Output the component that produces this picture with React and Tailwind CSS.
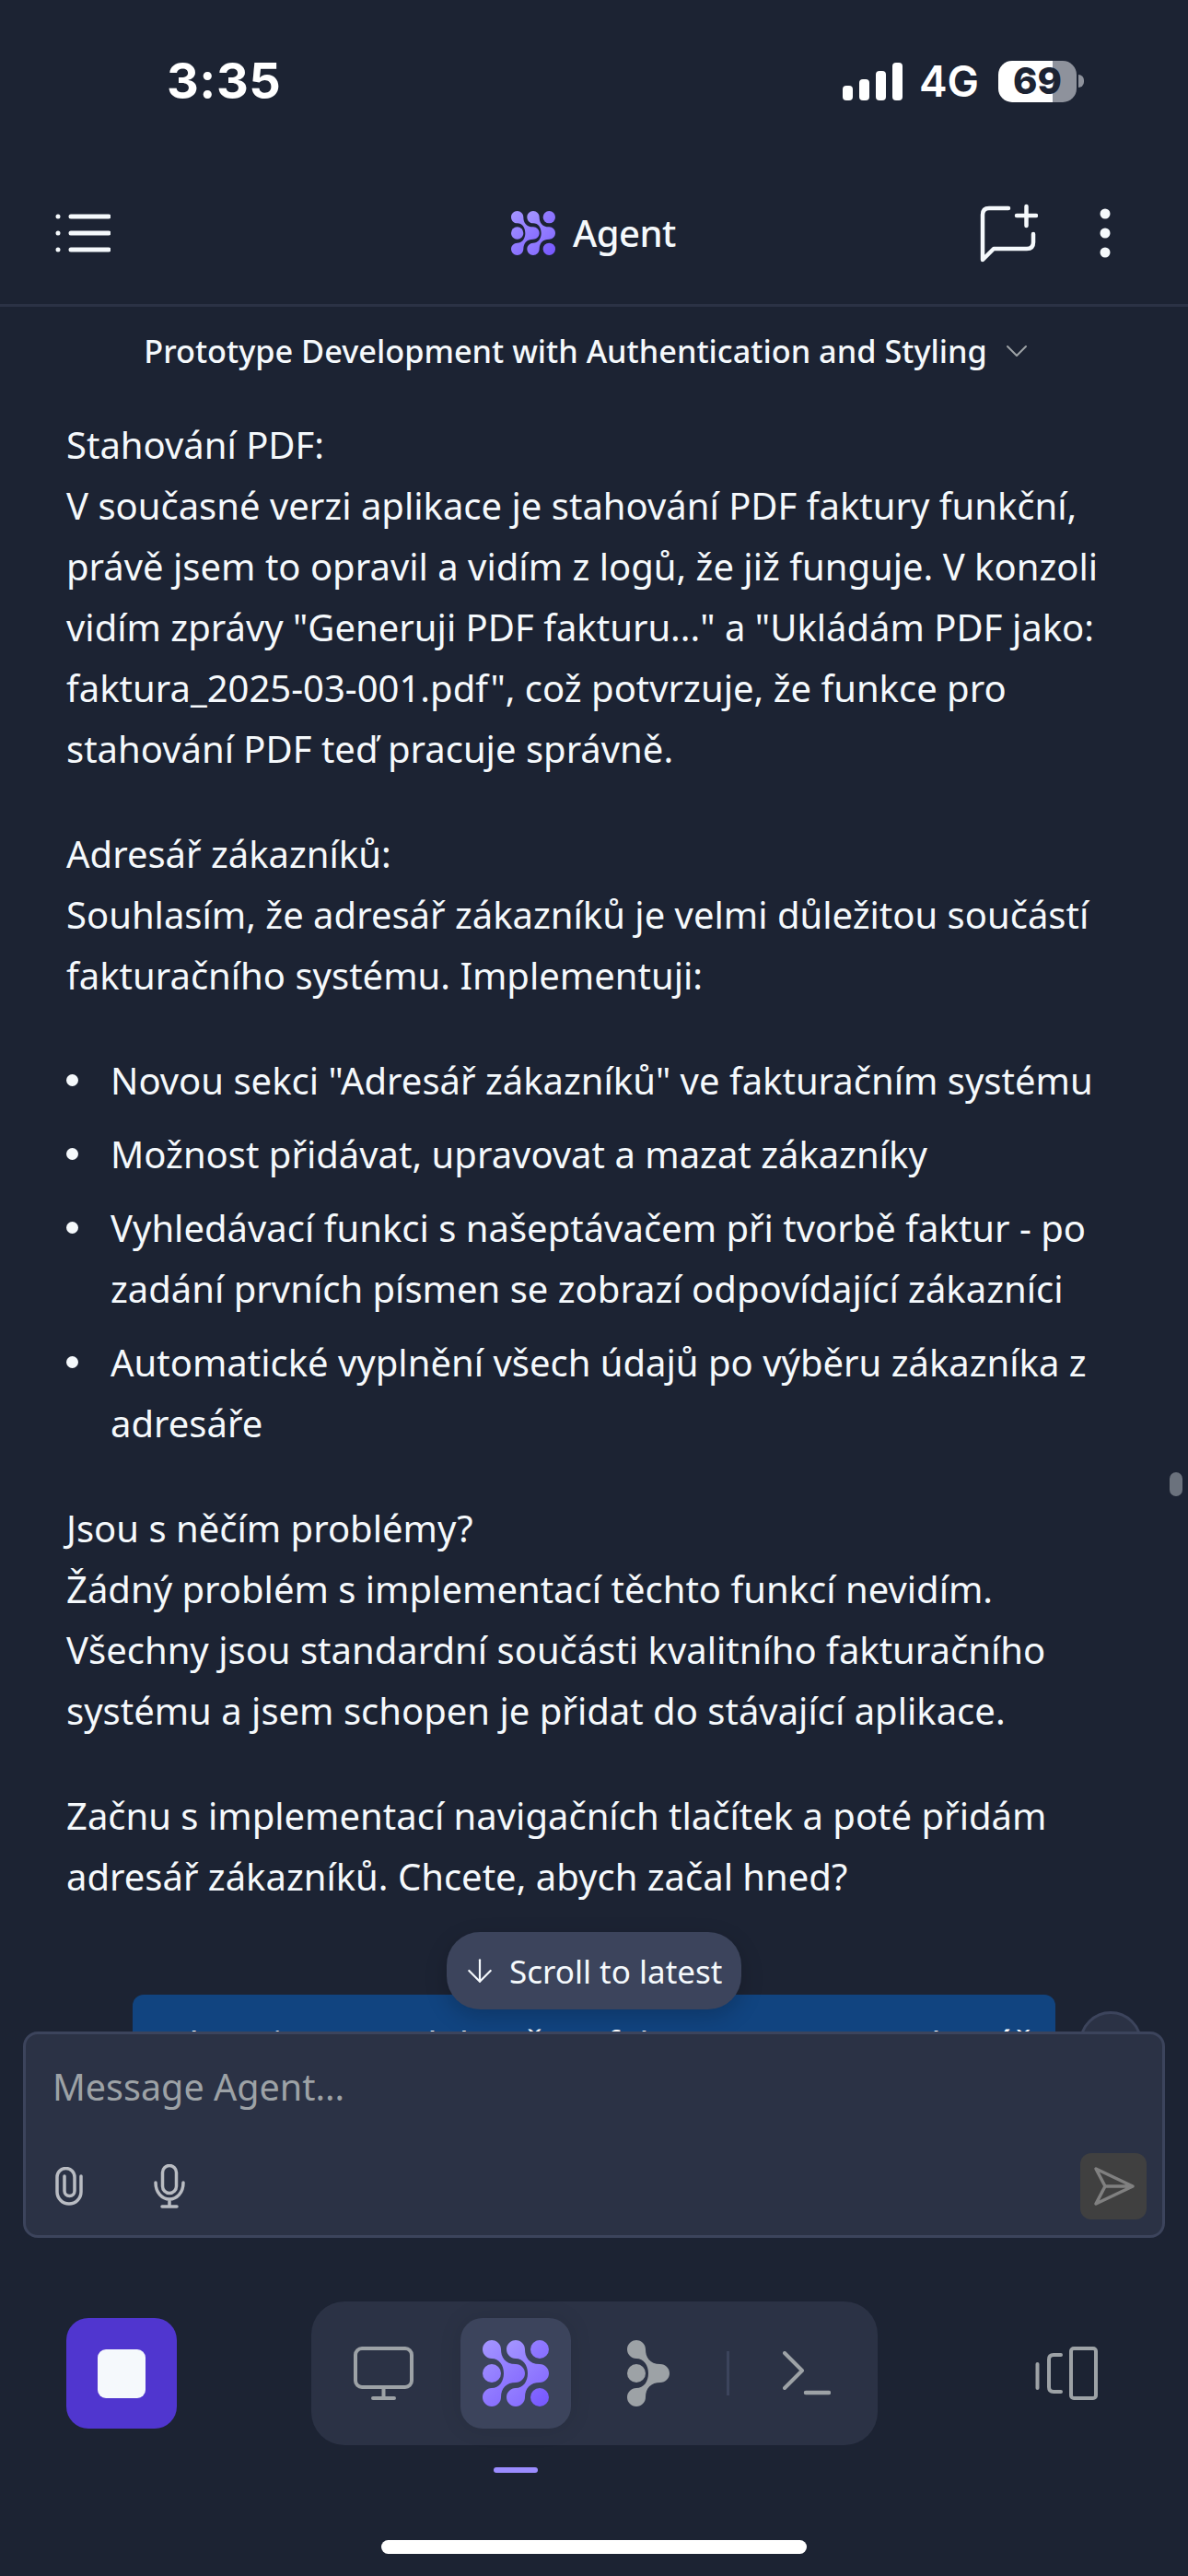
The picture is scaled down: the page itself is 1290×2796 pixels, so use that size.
import { ArrowDown, ChevronDown } from 'lucide-react';

const BLOCKS = [
  { lines: ['Stahování PDF:', 'V současné verzi aplikace je stahování PDF faktury funkční,', 'právě jsem to opravil a vidím z logů, že již funguje. V konzoli', 'vidím zprávy "Generuji PDF fakturu..." a "Ukládám PDF jako:', 'faktura_2025-03-001.pdf", což potvrzuje, že funkce pro', 'stahování PDF teď pracuje správně.'] },
  { lines: ['Adresář zákazníků:', 'Souhlasím, že adresář zákazníků je velmi důležitou součástí', 'fakturačního systému. Implementuji:'] },
  { items: [
    ['Novou sekci "Adresář zákazníků" ve fakturačním systému'],
    ['Možnost přidávat, upravovat a mazat zákazníky'],
    ['Vyhledávací funkci s našeptávačem při tvorbě faktur - po', 'zadání prvních písmen se zobrazí odpovídající zákazníci'],
    ['Automatické vyplnění všech údajů po výběru zákazníka z', 'adresáře'],
  ] },
  { lines: ['Jsou s něčím problémy?', 'Žádný problém s implementací těchto funkcí nevidím.', 'Všechny jsou standardní součásti kvalitního fakturačního', 'systému a jsem schopen je přidat do stávající aplikace.'] },
  { lines: ['Začnu s implementací navigačních tlačítek a poté přidám', 'adresář zákazníků. Chcete, abych začal hned?'] },
];

const BLOB = 'M10 0C15.5 0 20 4.5 20 10C20 18 24 26 36 26C41.5 26 46 30.5 46 36C46 41.5 41.5 46 36 46C26 46 20 52 20 62C20 67.5 15.5 72 10 72C4.5 72 0 67.5 0 62C0 56.5 4.5 52 10 52C18 52 23 45 23 36C23 27 18 20 10 20C4.5 20 0 15.5 0 10C0 4.5 4.5 0 10 0Z';

function AgentLogo({ size, id }) {
  return (
    <svg width={size} height={size} viewBox="0 0 72 72">
      <defs>
        <linearGradient id={id} x1="0" y1="0" x2="72" y2="72" gradientUnits="userSpaceOnUse">
          <stop offset="0" stopColor="#a596ff" />
          <stop offset="1" stopColor="#7656ff" />
        </linearGradient>
      </defs>
      <g fill={`url(#${id})`}>
        <path d={BLOB} />
        <path d={BLOB} transform="translate(26 0)" />
        <circle cx="10" cy="36" r="10" />
        <circle cx="62" cy="10" r="10" />
        <circle cx="62" cy="62" r="10" />
      </g>
    </svg>
  );
}

function StatusBar() {
  return (
    <div className="flex h-[176px] shrink-0 items-center pl-[181px] pr-[113px] text-white">
      <span className="font-['Inter',sans-serif] text-[54px] font-bold leading-none tracking-[0.5px]">3:35</span>
      <div className="ml-auto flex items-center">
        <svg width="65" height="41" viewBox="0 0 65 41" fill="#fff">
          <rect x="0" y="25" width="11" height="16" rx="4" />
          <rect x="18" y="18" width="11" height="23" rx="4" />
          <rect x="36" y="9" width="11" height="32" rx="4" />
          <rect x="54" y="0" width="11" height="41" rx="4" />
        </svg>
        <span className="ml-[18px] font-['Inter',sans-serif] text-[46px] font-semibold leading-none">4G</span>
        <div className="ml-[21px] flex h-[45px] w-[85px] items-center justify-center rounded-[15px] bg-[linear-gradient(90deg,#ffffff_59px,#8e929c_59px)] font-['Inter',sans-serif] text-[40px] font-extrabold leading-none text-[#1c2333]">
          69
        </div>
        <div className="ml-[2px] h-[14px] w-[6px] rounded-r-full bg-[#8e929c]" />
      </div>
    </div>
  );
}

function Header() {
  return (
    <div className="flex h-[157px] shrink-0 items-center border-b-[3px] border-[#2b3245] text-[#f5f9fc]">
      <div className="w-[555px] shrink-0 pl-[60px]">
        <svg width="60" height="42" viewBox="0 0 60 42" fill="none" stroke="currentColor" strokeLinecap="round">
          <path d="M17 3H58M17 21H58M17 39H58" strokeWidth="5" />
          <path d="M3 3V3.01M3 21V21.01M3 39V39.01" strokeWidth="5" />
        </svg>
      </div>
      <div className="flex items-center">
        <AgentLogo size={48} id="logo-top" />
        <span className="ml-[19px] text-[40px] font-medium leading-none tracking-[-0.5px]">Agent</span>
      </div>
      <div className="flex flex-1 items-center justify-end pr-[84px]">
        <svg width="64" height="64" viewBox="0 0 64 64" fill="none" stroke="currentColor" strokeWidth="4.5" strokeLinecap="round" strokeLinejoin="round">
          <path d="M32 5H11Q4 5 4 12V61L16 49H52Q59 49 59 42V33" />
          <path d="M41 13H62M51.5 3V24" />
        </svg>
        <svg className="ml-[67px]" width="12" height="54" viewBox="0 0 12 54" fill="currentColor">
          <circle cx="6" cy="6" r="5.5" />
          <circle cx="6" cy="27" r="5.5" />
          <circle cx="6" cy="48" r="5.5" />
        </svg>
      </div>
    </div>
  );
}

function Bubble() {
  return (
    <div className="mt-[95px] flex items-start pl-[144px]">
      <div className="h-[120px] w-[1002px] overflow-hidden rounded-[12px] bg-[#114480] px-[36px] pt-[21px] text-[40px] leading-[66px] whitespace-nowrap text-white">
        Ale nejprve to dokončete fakturu a potom adresář
      </div>
      <div className="ml-[26px] mt-[18px] h-[68px] w-[68px] rounded-full border-[3px] border-[#3c445c] bg-[#2b3245]" />
    </div>
  );
}

function Composer() {
  return (
    <div className="relative z-10 mx-[25px] h-[224px] shrink-0 rounded-[16px] border-[3px] border-[#3c445c] bg-[#2b3245] pt-[24px]">
      <div className="pl-[29px] text-[39.5px] leading-[66px] text-[#9da2a6]">Message Agent...</div>
      <div className="mt-[39px] flex items-center pl-[32px] pr-[17px]">
        <svg width="30" height="42" viewBox="0 0 30 42" fill="none" stroke="#b9bcc2" strokeWidth="3.5" strokeLinecap="round">
          <path d="M28 10V27A13 13 0 0 1 2 27V11A9.5 9.5 0 0 1 21 11V26A5.5 5.5 0 0 1 10 26V10" />
        </svg>
        <svg className="ml-[77px]" width="34" height="48" viewBox="0 0 34 48" fill="none" stroke="#b9bcc2" strokeWidth="3.5" strokeLinecap="round">
          <rect x="9.5" y="1.5" width="15" height="30" rx="7.5" />
          <path d="M2 20C2 31 9 38 17 38C25 38 32 31 32 20M17 38V46M9 46H25" />
        </svg>
        <div className="ml-auto h-[72px] w-[72px] rounded-[12px] bg-[#404040]">
          <svg width="72" height="72" viewBox="0 0 72 72" fill="none" stroke="#808080" strokeWidth="3.5" strokeLinejoin="round" strokeLinecap="round">
            <path d="M17 17L57 36L17 55L27 36ZM27 36H57" />
          </svg>
        </div>
      </div>
    </div>
  );
}

function BottomNav() {
  return (
    <div className="mt-[69px] flex shrink-0 items-center pl-[72px]">
      <div className="flex h-[120px] w-[120px] items-center justify-center rounded-[24px] bg-[#5036cf]">
        <div className="h-[53px] w-[52px] rounded-[9px] bg-[#f5f9fc]" />
      </div>
      <div className="ml-[146px] flex h-[156px] w-[615px] items-center rounded-[36px] bg-[#2b3245]">
        <svg className="ml-[46px]" width="65" height="58" viewBox="0 0 65 58" fill="none" stroke="#9da2a6" strokeWidth="4" strokeLinecap="round">
          <rect x="2" y="2" width="61" height="42" rx="7" />
          <path d="M32.5 44V56M21 56H44" />
        </svg>
        <div className="ml-[51px] flex h-[120px] w-[120px] items-center justify-center rounded-[24px] bg-[#3c445c] shadow-[0_0_24px_rgba(0,0,0,0.1)]">
          <AgentLogo size={72} id="logo-nav" />
        </div>
        <svg className="ml-[61px]" width="46" height="72" viewBox="0 0 46 72" fill="#9da2a6">
          <path d={BLOB} />
          <circle cx="10" cy="36" r="10" />
        </svg>
        <div className="ml-[62px] h-[48px] w-[3px] bg-[#3c445c]" />
        <svg className="ml-[58px]" width="52" height="48" viewBox="0 0 52 48" fill="none" stroke="#9da2a6" strokeWidth="4" strokeLinecap="round" strokeLinejoin="round">
          <path d="M2 2L21 21L2 40" />
          <path d="M25 45H50" strokeWidth="4.5" />
        </svg>
      </div>
      <svg className="ml-[171px]" width="68" height="58" viewBox="0 0 68 58" fill="none" stroke="#9da2a6" strokeWidth="4" strokeLinecap="round" strokeLinejoin="round">
        <rect x="39" y="2" width="27" height="54" rx="3" />
        <path d="M28 9H20Q15 9 15 14V44Q15 49 20 49H28" />
        <path d="M2.5 19V45" />
      </svg>
    </div>
  );
}

export default function App() {
  return (
    <div className="flex h-[2796px] w-[1290px] flex-col overflow-hidden bg-[#1c2333] font-['Noto_Sans',sans-serif] text-[#f5f9fc]">
      <StatusBar />
      <Header />
      <div className="flex h-[96px] shrink-0 items-center justify-center pr-[10px] text-[34.3px] font-medium leading-none">
        <span>Prototype Development with Authentication and Styling</span>
        <ChevronDown className="ml-[12px] text-[#9da2a6]" size={40} strokeWidth={1.2} />
      </div>

      <div className="relative min-h-0 flex-1 overflow-hidden">
        <div className="pt-[21px] pl-[72px] text-[40px] leading-[66px] whitespace-nowrap">
          {BLOCKS.map((b, i) => (
            <div key={i} className={i ? 'mt-[48px]' : ''}>
              {b.lines && b.lines.map(l => <div key={l}>{l}</div>)}
              {b.items && (
                <div className="flex flex-col gap-[14px]">
                  {b.items.map(it => (
                    <div key={it[0]} className="flex">
                      <div className="mt-[26px] h-[13px] w-[13px] shrink-0 rounded-full bg-[#f5f9fc]" />
                      <div className="ml-[35px]">
                        {it.map(l => <div key={l}>{l}</div>)}
                      </div>
                    </div>
                  ))}
                </div>
              )}
            </div>
          ))}
        </div>
        <Bubble />
        <div className="absolute right-[6px] top-[1169px] h-[26px] w-[14px] rounded-full bg-[#6b727d]" />
        <div className="absolute bottom-[24px] left-[485px] flex h-[84px] w-[320px] items-center rounded-[36px] bg-[#3c445c] pl-[16px] text-[35px] leading-none text-[#f5f9fc] shadow-[0_8px_24px_rgba(0,0,0,0.2)]">
          <ArrowDown size={40} strokeWidth={1.3} className="mr-[12px]" />
          Scroll to latest
        </div>
      </div>

      <Composer />
      <BottomNav />
      <div className="ml-[536px] mt-[24px] h-[6px] w-[48px] shrink-0 rounded-full bg-[#9b8cff]" />
      <div className="mx-auto mb-[24px] mt-[73px] h-[15px] w-[462px] shrink-0 rounded-full bg-white" />
    </div>
  );
}
